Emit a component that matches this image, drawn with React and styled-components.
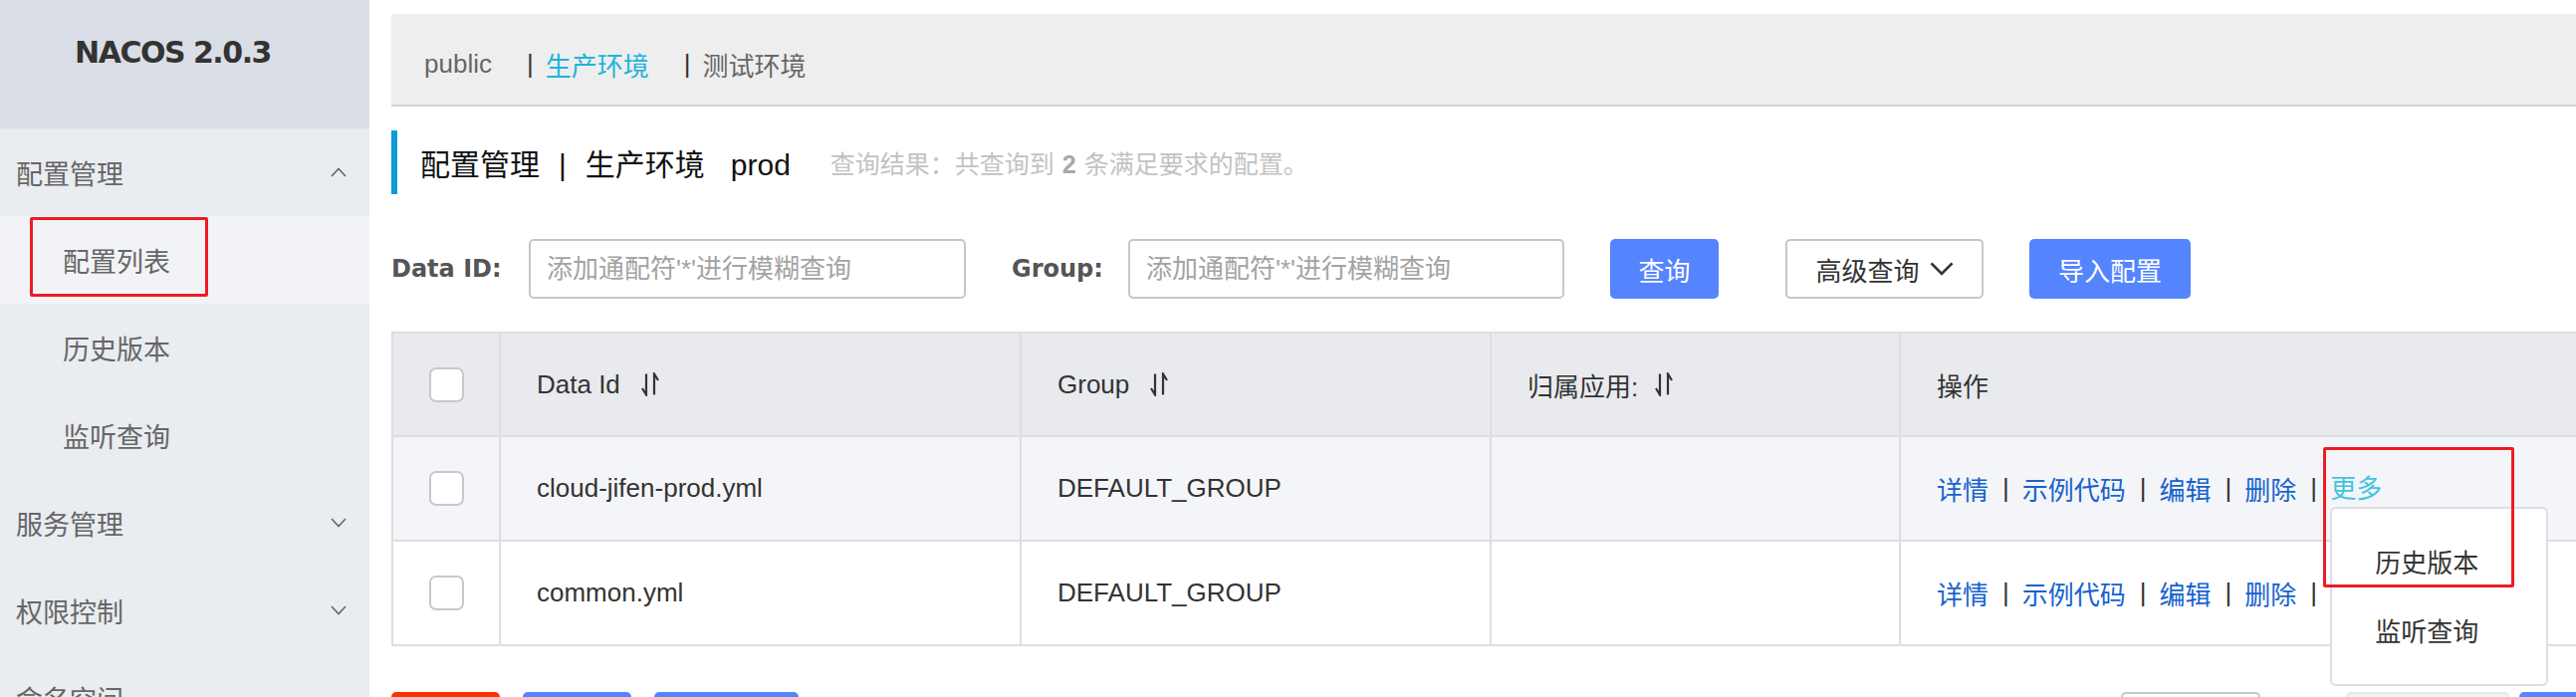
import React from 'react';
import styled, { createGlobalStyle, css } from 'styled-components';

const GlobalStyle = createGlobalStyle`
  *, *::before, *::after { box-sizing: border-box; }
  html, body { margin: 0; padding: 0; background: #fff; }
  body {
    font-family: "Liberation Sans", "Noto Sans CJK SC", sans-serif;
    color: #333;
  }
`

const Page = styled.div`
  display: flex;
  width: 2587px;
  height: 700px;
  overflow: hidden;
`

/* ---------- sidebar ---------- */

const Sidebar = styled.aside`
  width: 371px;
  flex-shrink: 0;
  background: #e9ecf1;
  display: flex;
  flex-direction: column;
`

const Brand = styled.div`
  height: 129px;
  flex-shrink: 0;
  background: #d9dee6;
  display: flex;
  align-items: center;
  justify-content: center;
  padding: 0 24px 25px 0;
  font-family: "DejaVu Sans", sans-serif;
  font-weight: bold;
  font-size: 30px;
  letter-spacing: -1.5px;
  color: #333;
`

const MenuItem = styled.div`
  position: relative;
  height: 88px;
  flex-shrink: 0;
  display: flex;
  align-items: center;
  justify-content: space-between;
  padding: 0 23px 0 ${p => (p.$sub ? 63 : 16)}px;
  background: ${p => (p.$active ? '#f2f3f7' : 'transparent')};
  font-size: 27px;
  color: #666;
`

const Highlight = styled.div`
  position: absolute;
  top: ${p => p.$top}px;
  left: ${p => p.$left}px;
  width: ${p => p.$w}px;
  height: ${p => p.$h}px;
  border: 3px solid #ec1c24;
  border-radius: 2px;
  pointer-events: none;
  z-index: 10;
`

function Chevron({ up, color = '#666', w = 16, h = 10, sw = 1.6 }) {
  return (
    <svg width={w} height={h} viewBox="0 0 16 10" fill="none" stroke={color} strokeWidth={sw} preserveAspectRatio="none">
      <path d={up ? 'M1 9L8 1.5L15 9' : 'M1 1L8 8.5L15 1'} />
    </svg>
  )
}

/* ---------- main ---------- */

const Main = styled.main`
  flex: 1;
  min-width: 0;
  padding: 14px 0 0 22px;
  overflow: hidden;
`

const Content = styled.div`
  width: 2260px;
`

const NsBar = styled.div`
  height: 93px;
  background: #eeeeee;
  border-bottom: 2px solid #d2d2d2;
  display: flex;
  align-items: center;
  padding: 9px 0 0 33px;
  font-size: 26px;
`

const NsItem = styled.span`
  color: ${p => (p.$active ? '#1cb5da' : '#666')};
  margin-right: 35px;
`

const NsSep = styled.span`
  color: #333;
  margin-right: 12px;
`

const TitleBar = styled.div`
  margin-top: 24px;
  height: 64px;
  border-left: 6px solid #0d9bd8;
  display: flex;
  align-items: center;
  padding-left: 23px;
`

const Title = styled.h1`
  margin: 0;
  font-size: 30px;
  font-weight: normal;
  color: #111;
`

const TitlePipe = styled.span`
  margin: 0 19px;
`

const TitleNs = styled.span`
  margin-left: 26px;
`

const Summary = styled.span`
  margin-left: 40px;
  font-size: 25px;
  color: #c2c2c2;

  strong {
    color: #a8a8a8;
    margin: 0 8px;
  }
`

const SearchRow = styled.div`
  margin-top: 45px;
  height: 60px;
  display: flex;
  align-items: center;
`

const Label = styled.label`
  width: ${p => p.$w}px;
  flex-shrink: 0;
  font-family: "DejaVu Sans", sans-serif;
  font-weight: bold;
  font-size: 24px;
  color: #555;
`

const Input = styled.input`
  width: ${p => p.$w}px;
  height: 60px;
  margin-right: 46px;
  border: 2px solid #c4c6cf;
  border-radius: 5px;
  padding: 0 16px;
  font-family: inherit;
  font-size: 26px;
  color: #333;
  outline: none;

  &::placeholder { color: #a3a3a3; }
`

const Button = styled.button`
  width: ${p => p.$w}px;
  height: 60px;
  margin-right: ${p => p.$mr || 0}px;
  border-radius: 5px;
  font-family: inherit;
  font-size: 26px;
  display: inline-flex;
  align-items: center;
  justify-content: center;
  gap: 10px;
  padding: 0;
  cursor: pointer;
  flex-shrink: 0;

  ${p => p.$variant === 'primary' && css`
    background: #5584ff;
    border: none;
    color: #fff;
  `}
  ${p => p.$variant === 'danger' && css`
    background: #ff3000;
    border: none;
    color: #fff;
  `}
  ${p => p.$variant === 'normal' && css`
    background: #fff;
    border: 2px solid #c4c6cf;
    color: #333;
  `}
  ${p => p.$variant === 'muted' && css`
    background: #f2f3f7;
    border: 2px solid #e6e7eb;
    color: #999;
  `}
`

/* ---------- table ---------- */

const Table = styled.div`
  margin-top: 33px;
  border-top: 2px solid #dcdee3;
  border-left: 2px solid #dcdee3;
`

const Row = styled.div`
  display: grid;
  grid-template-columns: 108px 523px 472px 411px 1fr;
  height: ${p => p.$h}px;
  background: ${p => p.$bg};
  border-bottom: 2px solid #dcdee3;
`

const Cell = styled.div`
  position: relative;
  display: flex;
  align-items: center;
  justify-content: ${p => (p.$center ? 'center' : 'flex-start')};
  padding-left: ${p => (p.$center ? 0 : 36)}px;
  border-right: 2px solid #dcdee3;
  font-size: 26px;
  color: #333;
  white-space: nowrap;
`

const Checkbox = styled.span`
  width: 35px;
  height: 35px;
  border: 2px solid #c6c8cf;
  border-radius: 7px;
  background: #fff;
  display: inline-block;
`

const SortWrap = styled.span`
  margin-left: ${p => p.$ml}px;
  display: inline-flex;
`

function SortIcon({ ml = 20 }) {
  return (
    <SortWrap $ml={ml}>
      <svg width="20" height="24" viewBox="0 0 20 24" fill="none" stroke="#333" strokeWidth="2.2">
        <path d="M6 1.5V22.5L2 16" />
        <path d="M14 22.5V1.5L18 8" />
      </svg>
    </SortWrap>
  )
}

const Link = styled.span`
  color: ${p => (p.$light ? '#3ec4e0' : '#1662cf')};
  cursor: pointer;
`

const LinkSep = styled.span`
  color: #333;
  margin: 0 13px 0 14px;
`

const MoreWrap = styled.span`
  position: relative;
  display: inline-block;
  line-height: 30px;
`

const Dropdown = styled.div`
  position: absolute;
  top: 33px;
  left: 0;
  width: 219px;
  padding: 21px 0 17px;
  background: #fff;
  border: 2px solid #dcdee3;
  border-radius: 6px;
  z-index: 5;
`

const DropItem = styled.div`
  height: 69px;
  display: flex;
  align-items: center;
  padding-left: 43px;
  font-size: 26px;
  color: #333;
`

const Footer = styled.div`
  margin-top: 46px;
  display: flex;
  justify-content: space-between;
`

const Group = styled.div`
  display: flex;
`

const actions = ['详情', '示例代码', '编辑', '删除']

function Ops({ withMenu }) {
  return (
    <>
      {actions.map(a => (
        <React.Fragment key={a}>
          <Link>{a}</Link>
          <LinkSep>|</LinkSep>
        </React.Fragment>
      ))}
      <MoreWrap>
        <Link $light>更多</Link>
        {withMenu && (
          <>
            <Highlight $top={-27} $left={-7} $w={192} $h={141} />
            <Dropdown>
              <DropItem>历史版本</DropItem>
              <DropItem>监听查询</DropItem>
            </Dropdown>
          </>
        )}
      </MoreWrap>
    </>
  )
}

const rows = [
  { id: 'cloud-jifen-prod.yml', group: 'DEFAULT_GROUP', bg: '#f4f5f8', menu: true },
  { id: 'common.yml', group: 'DEFAULT_GROUP', bg: '#ffffff', menu: false },
]

export default function App() {
  return (
    <Page>
      <GlobalStyle />
      <Sidebar>
        <Brand>NACOS 2.0.3</Brand>
        <MenuItem>
          配置管理
          <Chevron up />
        </MenuItem>
        <MenuItem $sub $active>
          配置列表
          <Highlight $top={1} $left={30} $w={179} $h={80} />
        </MenuItem>
        <MenuItem $sub>历史版本</MenuItem>
        <MenuItem $sub>监听查询</MenuItem>
        <MenuItem>
          服务管理
          <Chevron />
        </MenuItem>
        <MenuItem>
          权限控制
          <Chevron />
        </MenuItem>
        <MenuItem>命名空间</MenuItem>
      </Sidebar>

      <Main>
        <Content>
          <NsBar>
            <NsItem>public</NsItem>
            <NsSep>|</NsSep>
            <NsItem $active>生产环境</NsItem>
            <NsSep>|</NsSep>
            <NsItem>测试环境</NsItem>
          </NsBar>

          <TitleBar>
            <Title>
              配置管理<TitlePipe>|</TitlePipe>生产环境<TitleNs>prod</TitleNs>
            </Title>
            <Summary>
              查询结果：共查询到<strong>2</strong>条满足要求的配置。
            </Summary>
          </TitleBar>

          <SearchRow>
            <Label $w={138}>Data ID:</Label>
            <Input $w={439} placeholder="添加通配符'*'进行模糊查询" />
            <Label $w={117}>Group:</Label>
            <Input $w={438} placeholder="添加通配符'*'进行模糊查询" />
            <Button $variant="primary" $w={109} $mr={67}>查询</Button>
            <Button $variant="normal" $w={199} $mr={46}>
              高级查询
              <Chevron color="#333" w={24} h={14} sw={1.8} />
            </Button>
            <Button $variant="primary" $w={162}>导入配置</Button>
          </SearchRow>

          <Table>
            <Row $h={104} $bg="#e9eaee">
              <Cell $center><Checkbox /></Cell>
              <Cell>Data Id<SortIcon /></Cell>
              <Cell>Group<SortIcon /></Cell>
              <Cell>归属应用:<SortIcon ml={16} /></Cell>
              <Cell>操作</Cell>
            </Row>
            {rows.map(r => (
              <Row key={r.id} $h={105} $bg={r.bg}>
                <Cell $center><Checkbox /></Cell>
                <Cell>{r.id}</Cell>
                <Cell>{r.group}</Cell>
                <Cell />
                <Cell><Ops withMenu={r.menu} /></Cell>
              </Row>
            ))}
          </Table>

          <Footer>
            <Group>
              <Button $variant="danger" $w={109} $mr={23} />
              <Button $variant="primary" $w={109} $mr={23} />
              <Button $variant="primary" $w={145} />
            </Group>
            <Group>
              <Button $variant="normal" $w={140} $mr={86} />
              <Button $variant="muted" $w={164} $mr={10} />
              <Button $variant="primary" $w={123} />
            </Group>
          </Footer>
        </Content>
      </Main>
    </Page>
  )
}
